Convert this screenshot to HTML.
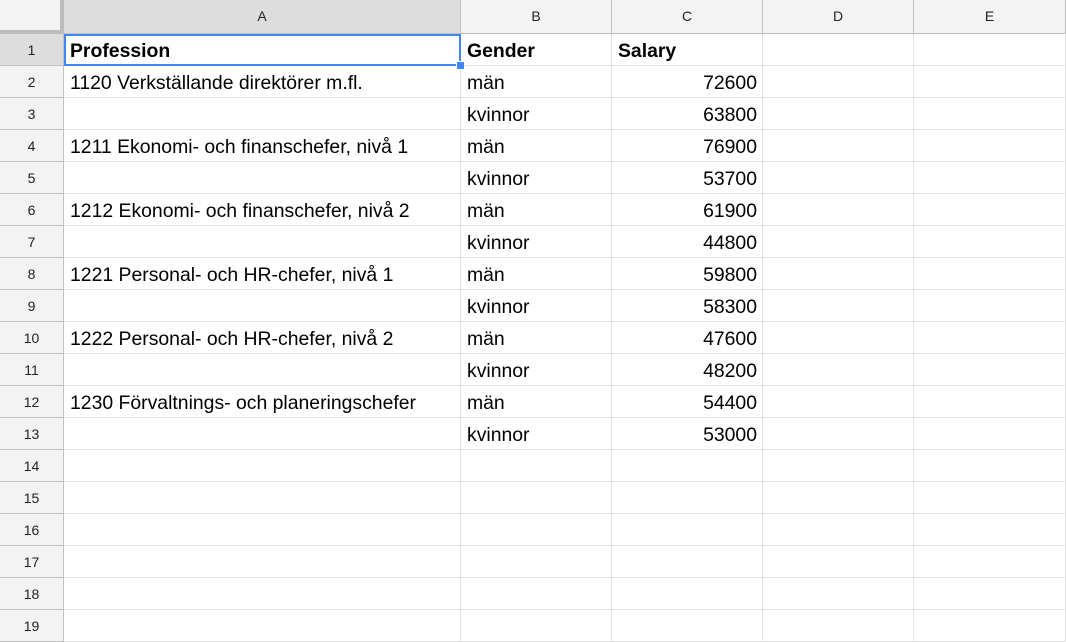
<!DOCTYPE html>
<html><head><meta charset="utf-8"><style>
body{margin:0;width:1066px;height:642px;overflow:hidden;background:#fff;font-family:"Liberation Sans",Arial,sans-serif;position:relative}
.h{position:absolute;background:#f3f3f3;color:#222;font-size:14px;text-align:center;box-sizing:border-box;border-right:1px solid #c0c0c0;border-bottom:1px solid #c0c0c0}
.c{position:absolute;box-sizing:border-box;border-right:1px solid #e2e2e2;border-bottom:1px solid #e2e2e2;font-size:19.4px;color:#000;padding:0 5px 0 6px;line-height:35px;white-space:nowrap;overflow:visible}
.r{text-align:right}
.b{font-weight:bold}
</style></head><body>
<div id="g"></div>
<script>
var cols=[64,461,612,763,914,1066],names=["A","B","C","D","E"];
var data={1:["Profession","Gender","Salary"],2:["1120 Verkställande direktörer m.fl.","män","72600"],3:["","kvinnor","63800"],4:["1211 Ekonomi- och finanschefer, nivå 1","män","76900"],5:["","kvinnor","53700"],6:["1212 Ekonomi- och finanschefer, nivå 2","män","61900"],7:["","kvinnor","44800"],8:["1221 Personal- och HR-chefer, nivå 1","män","59800"],9:["","kvinnor","58300"],10:["1222 Personal- och HR-chefer, nivå 2","män","47600"],11:["","kvinnor","48200"],12:["1230 Förvaltnings- och planeringschefer","män","54400"],13:["","kvinnor","53000"]};
var h='<div class="h" style="left:0;top:0;width:64px;height:34px;border-right:4px solid #bdbdbd;border-bottom:4px solid #bdbdbd"></div>';
for(var i=0;i<5;i++){h+='<div class="h" style="left:'+cols[i]+'px;top:0;width:'+(cols[i+1]-cols[i])+'px;height:34px;line-height:33px;'+(i==0?'background:#dddddd;':'')+'">'+names[i]+'</div>';}
for(var r=1;r<=19;r++){var t=34+(r-1)*32;
h+='<div class="h" style="left:0;top:'+t+'px;width:64px;height:32px;line-height:32px;'+(r==1?'background:#dddddd;':'')+'">'+r+'</div>';
for(var i=0;i<5;i++){var v=(data[r]&&data[r][i])||'';var cl='c'+(r==1?' b':'')+(i==2&&r>1?' r':'');
h+='<div class="'+cl+'" style="left:'+cols[i]+'px;top:'+t+'px;width:'+(cols[i+1]-cols[i])+'px;height:32px">'+v+'</div>';}}
h+='<div style="position:absolute;left:64px;top:34px;width:397px;height:32px;box-sizing:border-box;border:2px solid #4285f4"></div>';
h+='<div style="position:absolute;left:456px;top:61px;width:7px;height:7px;background:#4285f4;border:1px solid #fff"></div>';
document.getElementById('g').innerHTML=h;
</script>
</body></html>
